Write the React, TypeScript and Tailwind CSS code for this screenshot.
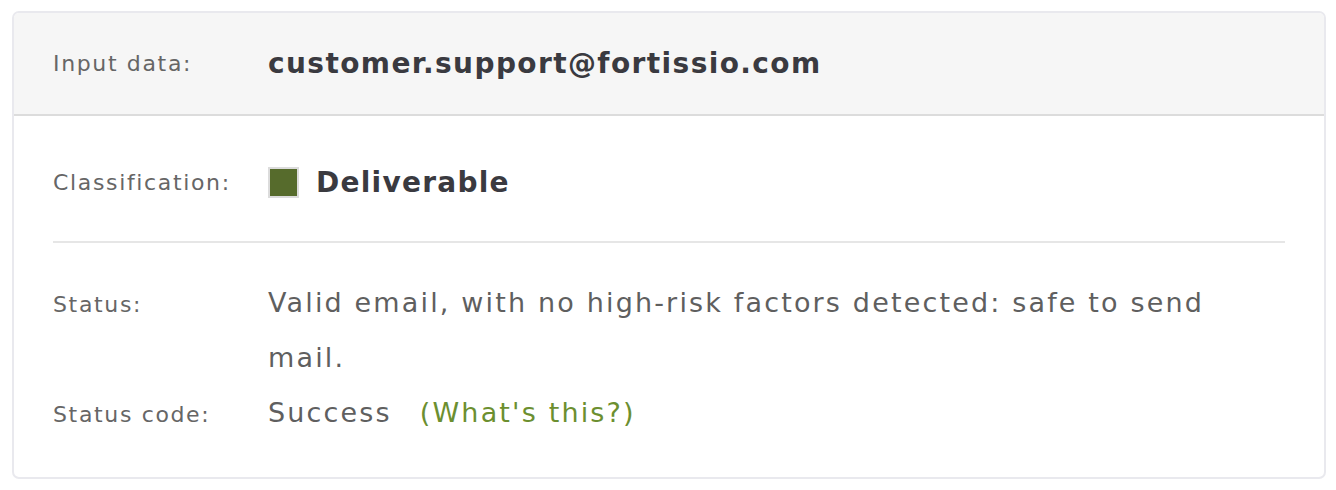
import React from 'react';

const font = { fontFamily: '"DejaVu Sans", "Open Sans", sans-serif' };

const Label: React.FC<{ children: React.ReactNode }> = ({ children }) => (
  <div className="w-[215px] shrink-0 text-[22px] tracking-[0.075em] text-[#666]">{children}</div>
);

const Row: React.FC<{ label: string; children: React.ReactNode }> = ({ label, children }) => (
  <div className="flex items-baseline">
    <Label>{label}</Label>
    <div className="min-w-0 max-w-[1000px] flex-1">{children}</div>
  </div>
);

const App: React.FC = () => {
  return (
    <div className="min-h-screen bg-white pl-[12px] pt-[11px]" style={font}>
      <div className="w-[1314px] overflow-hidden rounded-[7px] border-2 border-[#e9e9ee] bg-white">
        <div className="flex h-[103px] items-center border-b-2 border-[#dcdcdc] bg-[#f6f6f6] px-[39px]">
          <Label>Input data:</Label>
          <div className="text-[28px] font-bold tracking-[0.05em] text-[#3a3a40]">customer.support@fortissio.com</div>
        </div>

        <div className="px-[39px]">
          <div className="flex h-[127px] items-center border-b-2 border-[#e6e6e6] pb-[6px] pt-[14px] leading-none">
            <Label>Classification:</Label>
            <span className="mr-[17px] h-[31px] w-[31px] border-2 border-[#dcdcdc] bg-[#566b2c]" />
            <span className="text-[28px] font-bold tracking-[0.045em] text-[#3a3a40]">Deliverable</span>
          </div>

          <div className="pb-[35px] pt-[32px] text-[27px] leading-[55px] tracking-[0.08em] text-[#5f5f5f]">
            <Row label="Status:">Valid email, with no high-risk factors detected: safe to send mail.</Row>
            <Row label="Status code:">
              Success
              <a href="#" className="ml-[28px] text-[#6c8f30]">
                (What's this?)
              </a>
            </Row>
          </div>
        </div>
      </div>
    </div>
  );
};

export default App;
